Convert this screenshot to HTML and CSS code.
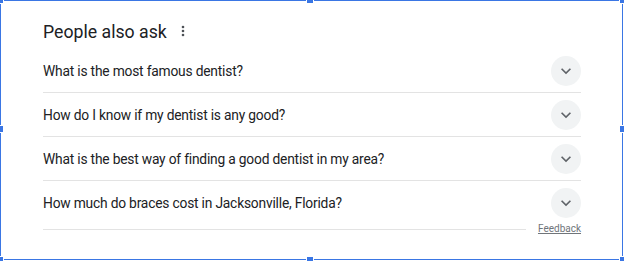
FILE: index.html
```html
<!DOCTYPE html>
<html>
<head>
<meta charset="utf-8">
<link rel="stylesheet" href="styles.css">
</head>
<body>
<div class="paa">
  <div class="head">
    <span class="title">People also ask</span>
    <svg class="more" width="6" height="12" viewBox="0 0 6 12"><circle cx="3" cy="2" r="1.3"/><circle cx="3" cy="6" r="1.3"/><circle cx="3" cy="10" r="1.3"/></svg>
  </div>
  <div class="row"><span class="q">What is the most famous dentist?</span><span class="btn"><svg width="20" height="20" viewBox="0 0 24 24"><path d="M7.41 8.59L12 13.17l4.59-4.58L18 10l-6 6-6-6 1.41-1.41z"/></svg></span></div>
  <div class="row"><span class="q">How do I know if my dentist is any good?</span><span class="btn"><svg width="20" height="20" viewBox="0 0 24 24"><path d="M7.41 8.59L12 13.17l4.59-4.58L18 10l-6 6-6-6 1.41-1.41z"/></svg></span></div>
  <div class="row"><span class="q">What is the best way of finding a good dentist in my area?</span><span class="btn"><svg width="20" height="20" viewBox="0 0 24 24"><path d="M7.41 8.59L12 13.17l4.59-4.58L18 10l-6 6-6-6 1.41-1.41z"/></svg></span></div>
  <div class="row last"><span class="q">How much do braces cost in Jacksonville, Florida?</span><span class="btn"><svg width="20" height="20" viewBox="0 0 24 24"><path d="M7.41 8.59L12 13.17l4.59-4.58L18 10l-6 6-6-6 1.41-1.41z"/></svg></span></div>
  <div class="foot"><span class="rule"></span><a class="feedback">Feedback</a></div>
</div>
<div class="frame">
  <span class="h tl"></span><span class="h tm"></span><span class="h tr"></span>
  <span class="h ml"></span><span class="h mr"></span>
  <span class="h bl"></span><span class="h bm"></span><span class="h br"></span>
</div>
</body>
</html>
```
FILE: styles.css
```css
html, body { margin: 0; padding: 0; background: #fff; }
body { width: 624px; height: 261px; overflow: hidden; position: relative; font-family: Roboto, "Liberation Sans", Arial, sans-serif; color: #202124; }
.paa { padding: 18px 0 0 43px; width: 538px; }
.head { height: 26px; display: flex; align-items: center; margin-bottom: 5px; }
.title { font-size: 17.7px; line-height: 26px; position: relative; top: 1px; }
.more { margin-left: 13px; fill: #4d5156; }
.row { height: 43px; border-bottom: 1px solid #e3e3e3; display: flex; align-items: center; justify-content: space-between; }
.row.last { border-bottom: none; }
.q { font-size: 13.8px; letter-spacing: -0.2px; line-height: 20px; }
.btn { width: 30px; height: 30px; border-radius: 50%; background: #f1f3f4; display: flex; align-items: center; justify-content: center; }
.btn svg { fill: #5f6368; }
.foot { display: flex; align-items: center; height: 12px; margin-top: -1px; }
.rule { flex: 1; height: 1px; background: #e3e3e3; margin-right: 12px; }
.feedback { font-size: 10px; color: #70757a; text-decoration: underline; line-height: 12px; }
.frame { position: absolute; left: 0; top: 0; width: 621px; height: 258px; border: 1px solid #3a76e4; }
.h { position: absolute; width: 6px; height: 6px; background: #3a76e4; border: 1px solid #fff; }
.tl { left: -5px; top: -5px; }
.tm { left: 305px; top: -5px; }
.tr { right: -5px; top: -5px; }
.ml { left: -5px; top: 124px; }
.mr { right: -5px; top: 124px; }
.bl { left: -5px; bottom: -5px; }
.bm { left: 305px; bottom: -5px; }
.br { right: -5px; bottom: -5px; }
```
